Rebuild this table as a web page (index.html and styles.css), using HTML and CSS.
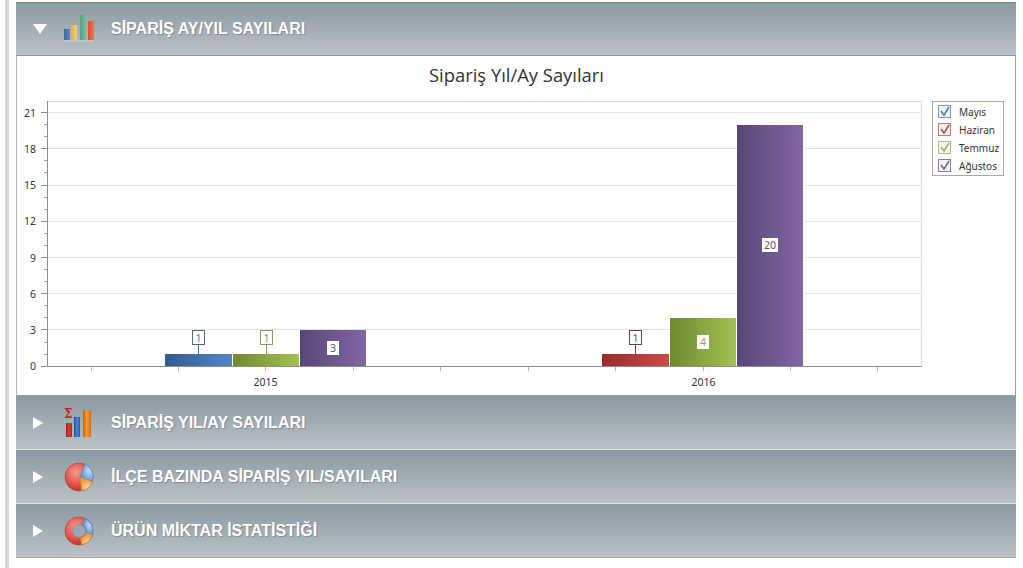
FILE: index.html
```html
<!DOCTYPE html>
<html lang="tr">
<head>
<meta charset="utf-8">
<title>Sipariş İstatistikleri</title>
<link rel="stylesheet" href="styles.css">
</head>
<body>
<div class="page">
  <div class="strip"></div>
  <div class="accordion">
    <div class="hdr first">
      <span class="arrow down"></span>
      <span class="icon">
        <svg width="32" height="28" viewBox="0 0 32 28">
          <defs>
            <linearGradient id="ib" x1="0" x2="1"><stop offset="0" stop-color="#3f69a8"/><stop offset="1" stop-color="#5b88c6"/></linearGradient>
            <linearGradient id="iy" x1="0" x2="1"><stop offset="0" stop-color="#e2b044"/><stop offset="1" stop-color="#f2cf78"/></linearGradient>
            <linearGradient id="ig" x1="0" x2="1"><stop offset="0" stop-color="#56a27e"/><stop offset="1" stop-color="#7cbc9c"/></linearGradient>
            <linearGradient id="ir" x1="0" x2="1"><stop offset="0" stop-color="#d9502f"/><stop offset="1" stop-color="#ec7456"/></linearGradient>
          </defs>
          <rect x="1" y="14" width="6" height="11" fill="url(#ib)"/>
          <rect x="8" y="10" width="6" height="15" fill="url(#iy)"/>
          <rect x="17" y="0" width="6" height="25" fill="url(#ig)"/>
          <rect x="25" y="6" width="6" height="19" fill="url(#ir)"/>
          <rect x="1" y="25" width="30" height="2" fill="#c7ced3" opacity="0.6"/>
        </svg>
      </span>
      <span class="label">SİPARİŞ AY/YIL SAYILARI</span>
    </div>
    <div class="content">
      <svg class="chart" width="998" height="339" viewBox="17 56 998 339">
        <defs>
          <linearGradient id="gb" x1="0" x2="1"><stop offset="0" stop-color="#34598d"/><stop offset="1" stop-color="#5188c8"/></linearGradient>
          <linearGradient id="gg" x1="0" x2="1"><stop offset="0" stop-color="#6d8a2f"/><stop offset="1" stop-color="#a2c254"/></linearGradient>
          <linearGradient id="gp" x1="0" x2="1"><stop offset="0" stop-color="#594676"/><stop offset="1" stop-color="#8266a6"/></linearGradient>
          <linearGradient id="gr" x1="0" x2="1"><stop offset="0" stop-color="#9c2c2e"/><stop offset="1" stop-color="#c84b47"/></linearGradient>
        </defs>
        <text class="title" x="516.5" y="82" text-anchor="middle">Sipariş Yıl/Ay Sayıları</text>

        <rect x="47.5" y="101.5" width="874" height="265" fill="#fff" stroke="#dedede"/>
        <path d="M48 112.5H921M48 148.5H921M48 185.5H921M48 221.5H921M48 257.5H921M48 293.5H921M48 329.5H921" stroke="#e2e2e2" fill="none"/>

        <rect x="165" y="354" width="67" height="12" fill="url(#gb)"/>
        <rect x="233" y="354" width="66" height="12" fill="url(#gg)"/>
        <rect x="300" y="330" width="66" height="36" fill="url(#gp)"/>
        <rect x="602" y="354" width="67" height="12" fill="url(#gr)"/>
        <rect x="670" y="318" width="66" height="48" fill="url(#gg)"/>
        <rect x="737" y="125" width="66" height="241" fill="url(#gp)"/>

        <path d="M47.5 101V366.5H921.5" stroke="#8c8c8c" fill="none"/>
        <path d="M41 366.5H47M41 329.5H47M41 293.5H47M41 257.5H47M41 221.5H47M41 185.5H47M41 148.5H47M41 112.5H47" stroke="#8c8c8c"/>
        <path d="M44 354.5H47M44 342.5H47M44 317.5H47M44 305.5H47M44 281.5H47M44 269.5H47M44 245.5H47M44 233.5H47M44 209.5H47M44 197.5H47M44 172.5H47M44 160.5H47M44 136.5H47M44 124.5H47" stroke="#a0a0a0"/>
        <path d="M91.5 367V371M178.5 367V371M265.5 367V371M353.5 367V371M440.5 367V371M528.5 367V371M615.5 367V371M703.5 367V371M790.5 367V371M877.5 367V371" stroke="#b4b4b4"/>

        <g class="axis">
          <text x="36" y="117" text-anchor="end">21</text>
          <text x="36" y="153" text-anchor="end">18</text>
          <text x="36" y="189" text-anchor="end">15</text>
          <text x="36" y="225" text-anchor="end">12</text>
          <text x="36" y="262" text-anchor="end">9</text>
          <text x="36" y="298" text-anchor="end">6</text>
          <text x="36" y="334" text-anchor="end">3</text>
          <text x="36" y="370" text-anchor="end">0</text>
          <text x="265.5" y="386" text-anchor="middle">2015</text>
          <text x="703.5" y="386" text-anchor="middle">2016</text>
        </g>

        <g class="vlabel">
          <path d="M198.5 344V354" stroke="#4a6a88"/>
          <rect x="192.5" y="330.5" width="12" height="14" fill="#fff" stroke="#4a6a88"/>
          <text x="198.5" y="341.5" text-anchor="middle" fill="#4a6a88">1</text>

          <path d="M266.5 344V354" stroke="#8a9a5c"/>
          <rect x="260.5" y="330.5" width="12" height="14" fill="#fff" stroke="#8a9a5c"/>
          <text x="266.5" y="341.5" text-anchor="middle" fill="#7d8f48">1</text>

          <path d="M635.5 344V354" stroke="#7a3c3c"/>
          <rect x="629.5" y="330.5" width="12" height="14" fill="#fff" stroke="#7a3c3c"/>
          <text x="635.5" y="341.5" text-anchor="middle" fill="#7a3c3c">1</text>

          <rect x="327" y="341" width="12" height="14" fill="#fff"/>
          <text x="333" y="352" text-anchor="middle" fill="#5c5070">3</text>

          <rect x="697" y="335" width="12" height="14" fill="#fff"/>
          <text x="703" y="346" text-anchor="middle" fill="#a89a4e">4</text>

          <rect x="762" y="238" width="16" height="14" fill="#fff"/>
          <text x="770" y="249" text-anchor="middle" fill="#5a5466">20</text>
        </g>

        <rect x="932.5" y="101.5" width="71" height="74" fill="#fff" stroke="#a8a8a8"/>
        <g class="legend">
          <rect x="938.5" y="105.5" width="12" height="12" fill="#eef3f9" stroke="#7f9dbf"/>
          <path d="M941 111L944 115L949 107" stroke="#4f7fbd" stroke-width="1.6" fill="none"/>
          <text x="959" y="115.5">Mayıs</text>

          <rect x="938.5" y="123.5" width="12" height="12" fill="#f9eeee" stroke="#b57d7b"/>
          <path d="M941 129L944 133L949 125" stroke="#c0504d" stroke-width="1.6" fill="none"/>
          <text x="959" y="133.5">Haziran</text>

          <rect x="938.5" y="141.5" width="12" height="12" fill="#f4f8ec" stroke="#a9bd86"/>
          <path d="M941 147L944 151L949 143" stroke="#9bbb59" stroke-width="1.6" fill="none"/>
          <text x="959" y="151.5">Temmuz</text>

          <rect x="938.5" y="159.5" width="12" height="12" fill="#f3eff7" stroke="#8c7ba3"/>
          <path d="M941 165L944 169L949 161" stroke="#7a62a0" stroke-width="1.6" fill="none"/>
          <text x="959" y="169.5">Ağustos</text>
        </g>
      </svg>
    </div>

    <div class="hdr">
      <span class="arrow right"></span>
      <span class="icon">
        <svg width="32" height="32" viewBox="0 0 32 32">
          <defs>
            <linearGradient id="sr" x1="0" x2="1"><stop offset="0" stop-color="#a81e1e"/><stop offset="0.5" stop-color="#e23a32"/><stop offset="1" stop-color="#b82622"/></linearGradient>
            <linearGradient id="sb" x1="0" x2="1"><stop offset="0" stop-color="#1e4f9a"/><stop offset="0.5" stop-color="#4a86d6"/><stop offset="1" stop-color="#2a5aa8"/></linearGradient>
            <linearGradient id="so" x1="0" x2="1"><stop offset="0" stop-color="#d0600c"/><stop offset="0.5" stop-color="#fa9a2e"/><stop offset="1" stop-color="#d86a12"/></linearGradient>
          </defs>
          <text x="1" y="11" class="sigma">Σ</text>
          <rect x="3" y="16" width="6" height="14" fill="url(#sr)"/>
          <rect x="11" y="10" width="6" height="20" fill="url(#sb)"/>
          <rect x="20" y="3" width="8" height="27" fill="url(#so)"/>
        </svg>
      </span>
      <span class="label">SİPARİŞ YIL/AY SAYILARI</span>
    </div>

    <div class="hdr">
      <span class="arrow right"></span>
      <span class="icon">
        <svg width="32" height="32" viewBox="0 0 32 32">
          <defs>
            <radialGradient id="pr" cx="0.4" cy="0.35" r="0.7"><stop offset="0" stop-color="#f59a8e"/><stop offset="0.6" stop-color="#e2524a"/><stop offset="1" stop-color="#b82e2a"/></radialGradient>
            <radialGradient id="pb" cx="0.7" cy="0.4" r="0.6"><stop offset="0" stop-color="#c4def6"/><stop offset="1" stop-color="#5f9ad8"/></radialGradient>
            <radialGradient id="po" cx="0.6" cy="0.8" r="0.6"><stop offset="0" stop-color="#fbd9a6"/><stop offset="1" stop-color="#eb9a48"/></radialGradient>
          </defs>
          <circle cx="16" cy="16" r="14" fill="url(#pr)" stroke="#b33a34" stroke-width="0.6"/>
          <path d="M17 16L21.8 2.9A14 14 0 0 1 29.5 20.5Z" fill="url(#pb)" stroke="#4c7fb8" stroke-width="0.6"/>
          <path d="M17 16L29.5 20.5A14 14 0 0 1 18.5 29.8Z" fill="url(#po)" stroke="#cf7d33" stroke-width="0.6"/>
        </svg>
      </span>
      <span class="label">İLÇE BAZINDA SİPARİŞ YIL/SAYILARI</span>
    </div>

    <div class="hdr last">
      <span class="arrow right"></span>
      <span class="icon">
        <svg width="32" height="32" viewBox="0 0 32 32">
          <defs>
            <radialGradient id="dr" cx="0.4" cy="0.35" r="0.7"><stop offset="0" stop-color="#f59a8e"/><stop offset="0.6" stop-color="#e2524a"/><stop offset="1" stop-color="#b82e2a"/></radialGradient>
            <radialGradient id="db" cx="0.7" cy="0.4" r="0.6"><stop offset="0" stop-color="#c4def6"/><stop offset="1" stop-color="#5f9ad8"/></radialGradient>
            <radialGradient id="do" cx="0.6" cy="0.8" r="0.6"><stop offset="0" stop-color="#fbd9a6"/><stop offset="1" stop-color="#eb9a48"/></radialGradient>
          </defs>
          <circle cx="16" cy="16" r="14" fill="url(#dr)" stroke="#b33a34" stroke-width="0.6"/>
          <path d="M22 3.4A14 14 0 0 1 29.6 19.5L22.8 17.8A7 7 0 0 0 19.2 9.8Z" fill="url(#db)" stroke="#4c7fb8" stroke-width="0.6"/>
          <path d="M29.6 19.5A14 14 0 0 1 18.5 29.8L17.4 22.9A7 7 0 0 0 22.8 17.8Z" fill="url(#do)" stroke="#cf7d33" stroke-width="0.6"/>
          <circle cx="16" cy="16" r="6.5" fill="#9aa8b4" stroke="#7d8a96" stroke-width="0.6"/>
        </svg>
      </span>
      <span class="label">ÜRÜN MİKTAR İSTATİSTİĞİ</span>
    </div>
  </div>
</div>
</body>
</html>
```
FILE: styles.css
```css
* { box-sizing: border-box; }
html, body { margin: 0; padding: 0; background: #fff; }
body { font-family: "Liberation Sans", Arial, sans-serif; }

.page {
  display: flex;
  height: 568px;
  overflow: hidden;
}
.strip {
  width: 4px;
  margin-left: 5px;
  background: #d5d5d5;
  flex: none;
}
.accordion {
  margin-left: 7px;
  width: 1000px;
  padding-top: 2px;
  flex: none;
}

.hdr {
  display: flex;
  align-items: center;
  height: 54px;
  padding-left: 17px;
  background: linear-gradient(#8b99a3 0%, #a2adb4 50%, #bac2c8 100%);
  border-bottom: 1px solid #dfe3e6;
}
.hdr.first {
  border-top: 1px solid #7f868b;
  border-bottom: 1px solid #8d9297;
}
.hdr.last { border-bottom: 1px solid #a5abaf; }

.arrow {
  width: 30px;
  height: 14px;
  position: relative;
  flex: none;
}
.arrow.down::before {
  content: "";
  position: absolute;
  left: 0;
  top: 2px;
  border-left: 7px solid transparent;
  border-right: 7px solid transparent;
  border-top: 10px solid #fff;
}
.arrow.right::before {
  content: "";
  position: absolute;
  left: 0;
  top: 1px;
  border-top: 6px solid transparent;
  border-bottom: 6px solid transparent;
  border-left: 10px solid #fff;
}

.icon {
  width: 48px;
  flex: none;
  display: flex;
  align-items: center;
}
.icon svg { display: block; }
.sigma {
  font-family: "DejaVu Serif", serif;
  font-weight: bold;
  font-size: 12px;
  fill: #c8201c;
}

.label {
  color: #fff;
  font-family: "Liberation Sans", Arial, sans-serif;
  font-weight: bold;
  font-size: 16px;
  text-shadow: 1px 1px 1px rgba(60, 70, 80, 0.35);
  white-space: nowrap;
}

.content {
  height: 340px;
  border-left: 1px solid #b4b4b4;
  border-right: 1px solid #9c9c9c;
  border-bottom: 1px solid #9c9c9c;
  background: #fff;
}
.chart { display: block; }
.title {
  font-family: "Open Sans", sans-serif;
  font-size: 18.4px;
  fill: #333;
}
.axis text {
  font-family: "Noto Sans", sans-serif;
  font-size: 10.5px;
  fill: #333;
}
.vlabel text {
  font-family: "Noto Sans", sans-serif;
  font-size: 10.5px;
}
.legend text {
  font-family: "Noto Sans", sans-serif;
  font-size: 10px;
  fill: #333;
}
```
